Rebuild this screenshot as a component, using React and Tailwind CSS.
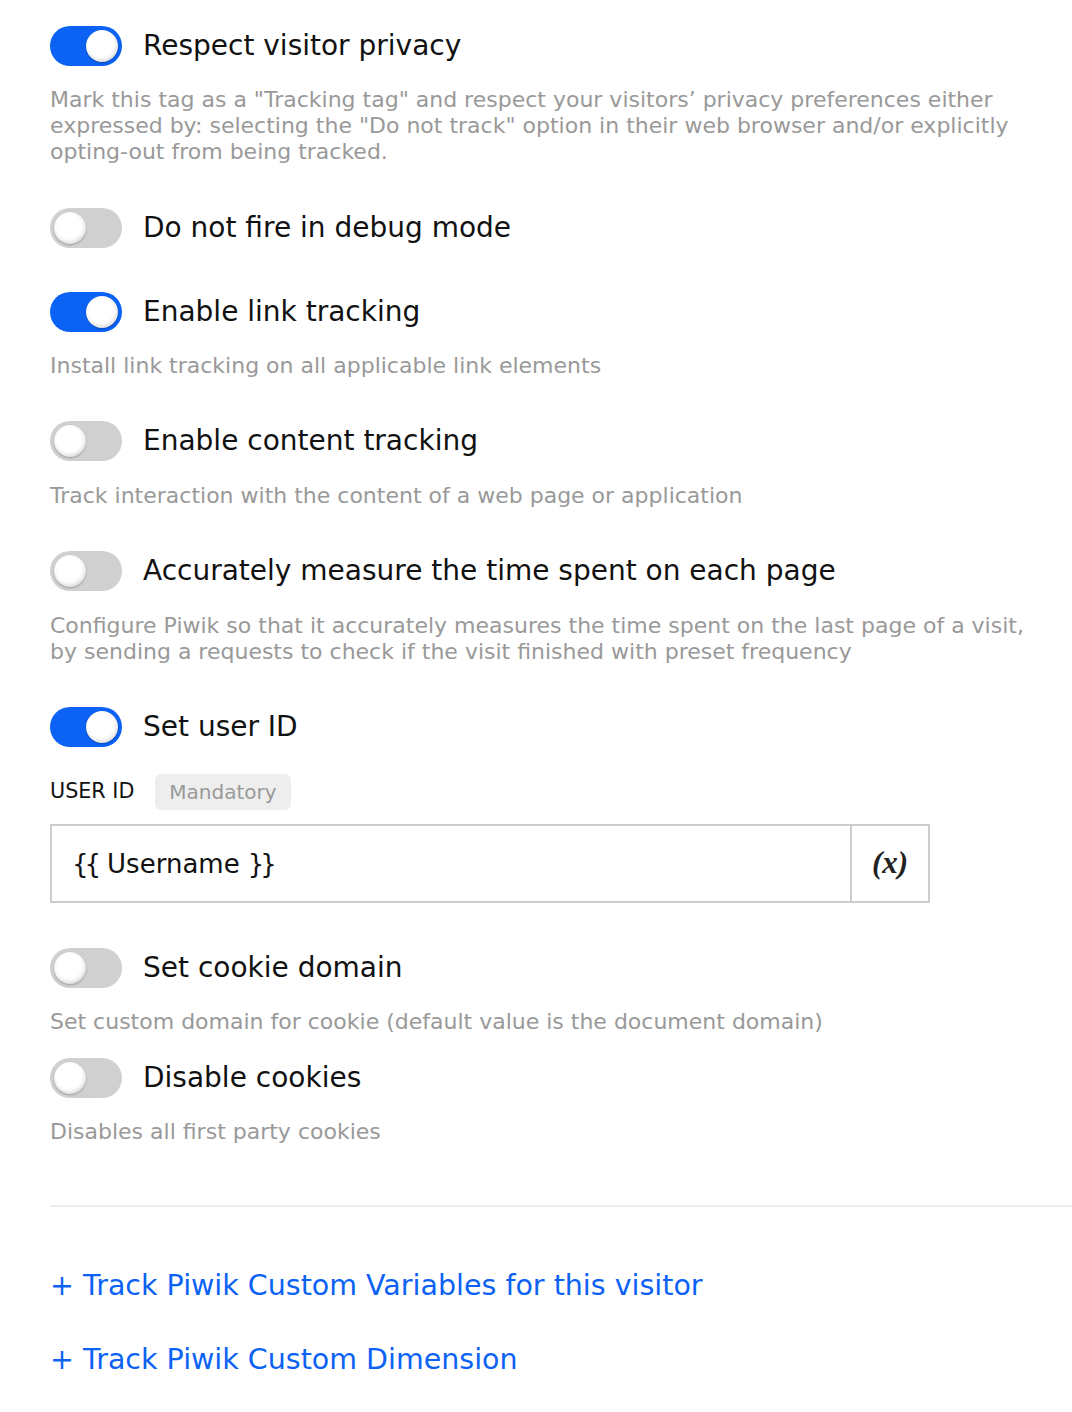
import React, { useState } from "react";

const Toggle = ({ on, onClick }) => (
  <button
    onClick={onClick}
    className={`relative w-[72px] h-[40px] shrink-0 rounded-full ${on ? "bg-[#0b62f5]" : "bg-[#d0d0d0]"}`}
  >
    <span
      className={`absolute top-[4px] w-[32px] h-[32px] rounded-full bg-white shadow-[inset_-1px_-2px_4px_rgba(0,0,0,0.15),0_1px_2px_rgba(0,0,0,0.25)] ${on ? "left-[36px]" : "left-[4px]"}`}
    />
  </button>
);

const Row = ({ on, label, className = "", onClick }) => (
  <div className={`flex items-center gap-[21px] h-[40px] ${className}`}>
    <Toggle on={on} onClick={onClick} />
    <span className="text-[28px] text-[#111] leading-none">{label}</span>
  </div>
);

const Desc = ({ children, className = "" }) => (
  <p className={`max-w-[1015px] text-[22px] leading-[26px] text-[#999] ${className}`}>{children}</p>
);

const App = () => {
  const [opts, setOpts] = useState({
    privacy: true,
    debug: false,
    link: true,
    content: false,
    time: false,
    userId: true,
    cookieDomain: false,
    noCookies: false,
  });
  const flip = (k) => setOpts({ ...opts, [k]: !opts[k] });

  return (
    <div className="min-h-screen bg-white pl-[50px] pt-[26px] pb-10 font-['DejaVu_Sans',Verdana,sans-serif]">
      <Row on={opts.privacy} onClick={() => flip("privacy")} label="Respect visitor privacy" />
      <Desc className="mt-[21px]">
        Mark this tag as a "Tracking tag" and respect your visitors’ privacy preferences either
        <br />
        expressed by: selecting the "Do not track" option in their web browser and/or explicitly
        <br />
        opting-out from being tracked.
      </Desc>

      <Row on={opts.debug} onClick={() => flip("debug")} label="Do not fire in debug mode" className="mt-[43px]" />

      <Row on={opts.link} onClick={() => flip("link")} label="Enable link tracking" className="mt-[44px]" />
      <Desc className="mt-[21px]">Install link tracking on all applicable link elements</Desc>

      <Row on={opts.content} onClick={() => flip("content")} label="Enable content tracking" className="mt-[42px]" />
      <Desc className="mt-[22px]">Track interaction with the content of a web page or application</Desc>

      <Row
        on={opts.time}
        onClick={() => flip("time")}
        label="Accurately measure the time spent on each page"
        className="mt-[42px]"
      />
      <Desc className="mt-[22px]">
        Configure Piwik so that it accurately measures the time spent on the last page of a visit,
        <br />
        by sending a requests to check if the visit finished with preset frequency
      </Desc>

      <Row on={opts.userId} onClick={() => flip("userId")} label="Set user ID" className="mt-[42px]" />
      <div className="flex items-center gap-[21px] mt-[27px]">
        <span className="text-[20.7px] text-[#111]">USER ID</span>
        <span className="h-[36px] px-[14px] flex items-center rounded-[6px] bg-[#eeeeee] text-[20px] text-[#999]">
          Mandatory
        </span>
      </div>
      <div className="mt-[14px] w-[880px] h-[79px] flex border-2 border-[#cccccc]">
        <div className="flex-1 flex items-center pl-[20px] pt-[2px] text-[26px] text-[#111]">
          <span className="tracking-[-4px]">{"{{"}</span>
          <span className="ml-[10px]">Username</span>
          <span className="ml-[8px] tracking-[-4px]">{"}}"}</span>
        </div>
        <div className="w-[78px] flex items-center justify-center border-l-2 border-[#cccccc] font-['Liberation_Serif',serif] italic font-bold text-[31px] text-[#222]">
          (x)
        </div>
      </div>

      <Row on={opts.cookieDomain} onClick={() => flip("cookieDomain")} label="Set cookie domain" className="mt-[45px]" />
      <Desc className="mt-[21px]">Set custom domain for cookie (default value is the document domain)</Desc>

      <Row on={opts.noCookies} onClick={() => flip("noCookies")} label="Disable cookies" className="mt-[23px]" />
      <Desc className="mt-[21px]">Disables all first party cookies</Desc>

      <div className="mt-[60px] border-t-2 border-[#eeeeee]" />

      <div className="mt-[61px] flex flex-col gap-[38px] text-[28.5px] leading-[36px] text-[#0b62f5]">
        <a href="#" className="w-fit">+ Track Piwik Custom Variables for this visitor</a>
        <a href="#" className="w-fit">+ Track Piwik Custom Dimension</a>
      </div>
    </div>
  );
};

export default App;
